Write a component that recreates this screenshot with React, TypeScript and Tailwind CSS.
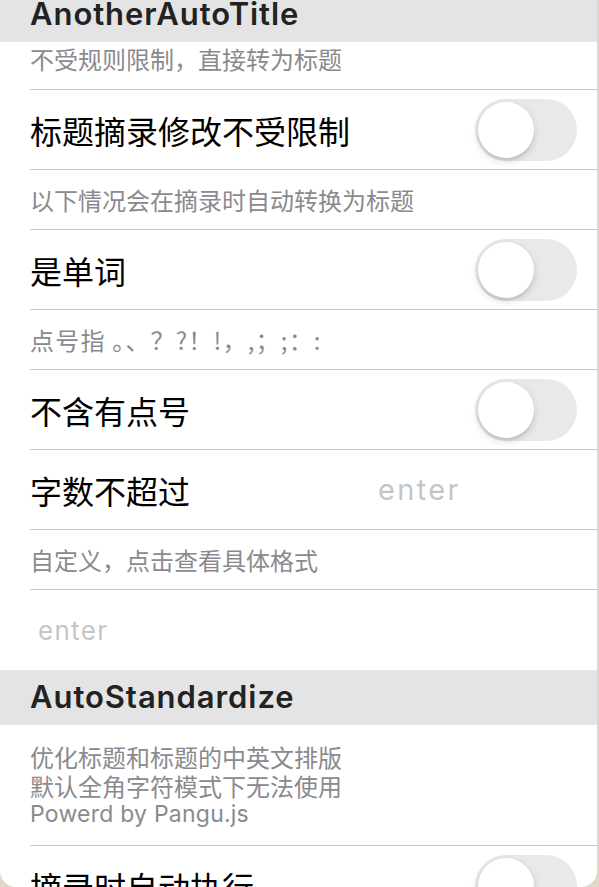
import React, { useState } from "react";

const latin = { fontFamily: '"Inter", "Noto Sans CJK SC", sans-serif' };

function Toggle({ on, onChange }: { on: boolean; onChange: (v: boolean) => void }) {
  return (
    <button
      onClick={() => onChange(!on)}
      className={`flex h-[62px] w-[102px] shrink-0 items-center rounded-full p-[3px] ${
        on ? "justify-end bg-[#34c759]" : "justify-start bg-[#e9e9eb]"
      }`}
    >
      <span className="block h-[56px] w-[56px] rounded-full bg-white shadow-[0_3px_8px_rgba(0,0,0,0.15),0_3px_1px_rgba(0,0,0,0.06)]" />
    </button>
  );
}

function Header({ title, first = false }: { title: string; first?: boolean }) {
  return (
    <div
      className={`flex h-[55px] items-center bg-[#e4e4e4] pl-[30px] text-[31px] font-semibold tracking-[0.03em] text-[#222] ${
        first ? "-mt-[13px]" : ""
      }`}
      style={latin}
    >
      {title}
    </div>
  );
}

function Desc({ children, first = false }: { children: React.ReactNode; first?: boolean }) {
  return (
    <div
      className={`ml-[30px] flex items-center border-b border-[#c8c7cc] text-[24px] text-[#8a8a8e] ${
        first ? "h-[48px] pb-[13px]" : "h-[60px]"
      }`}
    >
      {children}
    </div>
  );
}

function SwitchRow({ label }: { label: string }) {
  const [on, setOn] = useState(false);
  return (
    <div className="ml-[30px] flex h-[80px] items-center justify-between border-b border-[#c8c7cc] pr-[20px]">
      <span className="text-[32px] text-black">{label}</span>
      <Toggle on={on} onChange={setOn} />
    </div>
  );
}

export default function App() {
  const [maxLen, setMaxLen] = useState("");
  const [custom, setCustom] = useState("");

  return (
    <div className="min-h-screen bg-[#dcd7c6]" style={{ fontFamily: '"Noto Sans CJK SC", "Inter", sans-serif' }}>
      <div className="h-[887px] w-[597px] overflow-hidden rounded-b-[16px] bg-white">
        <Header title="AnotherAutoTitle" first />
        <Desc first>不受规则限制，直接转为标题</Desc>
        <SwitchRow label="标题摘录修改不受限制" />
        <Desc>以下情况会在摘录时自动转换为标题</Desc>
        <SwitchRow label="是单词" />
        <Desc>
          <span className="tracking-[0.05em]">点号指 。、？?！!，,；;：:</span>
        </Desc>
        <SwitchRow label="不含有点号" />
        <div className="ml-[30px] flex h-[80px] items-center justify-between border-b border-[#c8c7cc] pr-[20px]">
          <span className="text-[32px] text-black">字数不超过</span>
          <input
            value={maxLen}
            onChange={(e) => setMaxLen(e.target.value)}
            placeholder="enter"
            className="w-[199px] bg-transparent text-[29px] tracking-[0.08em] text-black outline-none placeholder:text-[#c5c5c7]"
            style={latin}
          />
        </div>
        <Desc>自定义，点击查看具体格式</Desc>
        <div className="ml-[30px] flex h-[80px] items-center pr-[20px]">
          <input
            value={custom}
            onChange={(e) => setCustom(e.target.value)}
            placeholder="enter"
            className="w-full bg-transparent pl-[8px] text-[26px] tracking-[0.05em] text-black outline-none placeholder:text-[#c5c5c7]"
            style={latin}
          />
        </div>
        <Header title="AutoStandardize" />
        <div className="ml-[30px] border-b border-[#c8c7cc] pt-[17px] pb-[16px] text-[24px] leading-[29px] text-[#8a8a8e]">
          <div>优化标题和标题的中英文排版</div>
          <div>默认全角字符模式下无法使用</div>
          <div className="text-[23px] tracking-[0.01em]" style={latin}>
            Powerd by Pangu.js
          </div>
        </div>
        <SwitchRow label="摘录时自动执行" />
      </div>
    </div>
  );
}
